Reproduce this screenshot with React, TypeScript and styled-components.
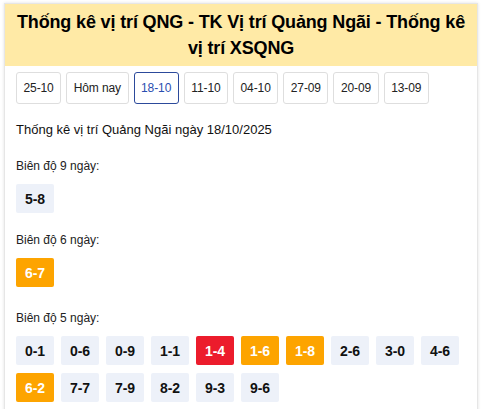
import React from "react";
import styled, { createGlobalStyle } from "styled-components";

const Global = createGlobalStyle`
  html, body { margin: 0; padding: 0; background: #fff; }
  body { font-family: "Liberation Sans", Arial, Helvetica, sans-serif; color: #000; }
  * { box-sizing: border-box; }
`;

const Page = styled.div`
  padding: 3px 4px 0 4px;
`;

const Card = styled.section`
  background: #fff;
  border: 1px solid #e6e6e6;
  box-shadow: 0 0 3px rgba(0, 0, 0, 0.12);
  min-height: 420px;
`;

const Header = styled.h1`
  margin: 0;
  background: #ffeaa6;
  font-size: 18px;
  font-weight: bold;
  line-height: 26px;
  letter-spacing: -0.15px;
  text-align: center;
  padding: 5px 3px 5px;
  color: #000;
`;

const Body = styled.div`
  padding: 6px 11px 0 11px;
`;

const DateRow = styled.nav`
  display: flex;
  flex-wrap: wrap;
  gap: 5px;
`;

const DateBtn = styled.a<{ $active?: boolean }>`
  display: inline-flex;
  align-items: center;
  justify-content: center;
  height: 32px;
  padding: 0 6.5px;
  border: 1px solid ${(p) => (p.$active ? "#2c4a9b" : "#dedede")};
  border-radius: 3px;
  font-size: 12px;
  letter-spacing: -0.1px;
  color: ${(p) => (p.$active ? "#2a4db0" : "#222")};
  text-decoration: none;
  background: #fff;
`;

const Title = styled.p`
  margin: 17px 0 0 0;
  font-size: 13px;
  line-height: 18px;
  color: #111;
`;

const Group = styled.div`
  margin-top: 19px;
  &:last-child {
    margin-top: 23px;
  }
`;

const Label = styled.div`
  font-size: 12px;
  line-height: 16px;
  color: #222;
`;

const Chips = styled.div`
  display: flex;
  flex-wrap: wrap;
  gap: 8px 7px;
  margin-top: 10px;
`;

type Tone = "normal" | "orange" | "red";

const Chip = styled.span<{ $tone: Tone }>`
  display: inline-flex;
  align-items: center;
  justify-content: center;
  width: 38px;
  height: 29px;
  border-radius: 2px;
  font-size: 14px;
  font-weight: bold;
  background: ${(p) =>
    p.$tone === "red" ? "#ec1c2c" : p.$tone === "orange" ? "#fda400" : "#edf1f9"};
  color: ${(p) => (p.$tone === "normal" ? "#111" : "#fff")};
`;

const dates = ["25-10", "Hôm nay", "18-10", "11-10", "04-10", "27-09", "20-09", "13-09"];

const groups: { label: string; items: [string, Tone][] }[] = [
  { label: "Biên độ 9 ngày:", items: [["5-8", "normal"]] },
  { label: "Biên độ 6 ngày:", items: [["6-7", "orange"]] },
  {
    label: "Biên độ 5 ngày:",
    items: [
      ["0-1", "normal"],
      ["0-6", "normal"],
      ["0-9", "normal"],
      ["1-1", "normal"],
      ["1-4", "red"],
      ["1-6", "orange"],
      ["1-8", "orange"],
      ["2-6", "normal"],
      ["3-0", "normal"],
      ["4-6", "normal"],
      ["6-2", "orange"],
      ["7-7", "normal"],
      ["7-9", "normal"],
      ["8-2", "normal"],
      ["9-3", "normal"],
      ["9-6", "normal"],
    ],
  },
];

export default function App() {
  return (
    <>
      <Global />
      <Page>
        <Card>
          <Header>Thống kê vị trí QNG - TK Vị trí Quảng Ngãi - Thống kê vị trí XSQNG</Header>
          <Body>
            <DateRow>
              {dates.map((d) => (
                <DateBtn key={d} $active={d === "18-10"}>
                  {d}
                </DateBtn>
              ))}
            </DateRow>
            <Title>Thống kê vị trí Quảng Ngãi ngày 18/10/2025</Title>
            {groups.map((g) => (
              <Group key={g.label}>
                <Label>{g.label}</Label>
                <Chips>
                  {g.items.map(([t, tone]) => (
                    <Chip key={t} $tone={tone}>
                      {t}
                    </Chip>
                  ))}
                </Chips>
              </Group>
            ))}
          </Body>
        </Card>
      </Page>
    </>
  );
}
